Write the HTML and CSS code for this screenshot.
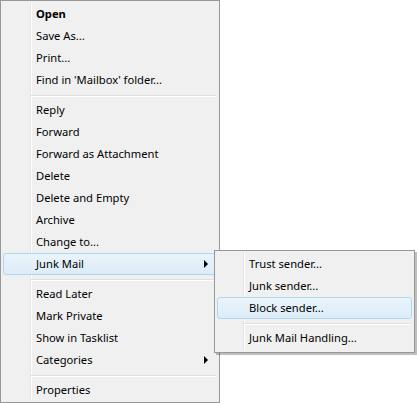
FILE: index.html
```html
<!DOCTYPE html>
<html>
<head>
<meta charset="utf-8">
<link rel="stylesheet" href="styles.css">
</head>
<body>
<div class="menu main">
  <div class="item bold">Open</div>
  <div class="item">Save As...</div>
  <div class="item">Print...</div>
  <div class="item">Find in 'Mailbox' folder...</div>
  <div class="sep"></div>
  <div class="item">Reply</div>
  <div class="item">Forward</div>
  <div class="item">Forward as Attachment</div>
  <div class="item">Delete</div>
  <div class="item">Delete and Empty</div>
  <div class="item">Archive</div>
  <div class="item">Change to...</div>
  <div class="item hot sub">Junk Mail<span class="arrow"></span></div>
  <div class="sep"></div>
  <div class="item">Read Later</div>
  <div class="item">Mark Private</div>
  <div class="item">Show in Tasklist</div>
  <div class="item sub">Categories<span class="arrow"></span></div>
  <div class="sep"></div>
  <div class="item">Properties</div>
</div>
<div class="menu submenu">
  <div class="item">Trust sender...</div>
  <div class="item">Junk sender...</div>
  <div class="item hot">Block sender...</div>
  <div class="sep"></div>
  <div class="item">Junk Mail Handling...</div>
</div>
</body>
</html>
```

FILE: styles.css
```css
html, body {
  margin: 0;
  padding: 0;
  background: #fff;
}
body {
  position: relative;
  width: 417px;
  height: 404px;
  overflow: hidden;
  font-family: "Noto Sans", "Open Sans", sans-serif;
  font-size: 11.2px;
  color: #000;
}
.menu {
  box-sizing: border-box;
  border: 1px solid #979797;
  background: #f0f0f0;
  padding: 2px;
  position: relative;
}
.menu::before {
  content: "";
  position: absolute;
  top: 2px;
  bottom: 2px;
  width: 1px;
  background: #e2e3e3;
  border-right: 1px solid #fff;
}
.main {
  width: 220px;
  height: 403px;
}
.main::before { left: 29px; }
.submenu {
  position: absolute;
  left: 214px;
  top: 250px;
  width: 201px;
  height: 103px;
  box-shadow: 2px 2px 0 rgba(0,0,0,0.25);
}
.submenu::before { left: 28px; }
.item {
  position: relative;
  box-sizing: border-box;
  height: 22px;
  line-height: 20px;
  padding-left: 32px;
  border: 1px solid transparent;
  border-radius: 3px;
  white-space: nowrap;
}
.submenu .item { padding-left: 31px; }
.bold { font-weight: bold; }
.hot {
  border-color: #aed8ee;
  background: linear-gradient(#eaf4fb, #dcecf8);
}
.sep {
  height: 8px;
  position: relative;
}
.sep::after {
  content: "";
  position: absolute;
  left: 28px;
  right: 1px;
  top: 4px;
  height: 1px;
  background: #e0e0e0;
  border-bottom: 1px solid #fff;
}
.submenu .sep::after { left: 27px; }
.arrow {
  position: absolute;
  left: 200px;
  top: 6px;
  width: 0;
  height: 0;
  border-top: 4px solid transparent;
  border-bottom: 4px solid transparent;
  border-left: 4px solid #000;
}
```
